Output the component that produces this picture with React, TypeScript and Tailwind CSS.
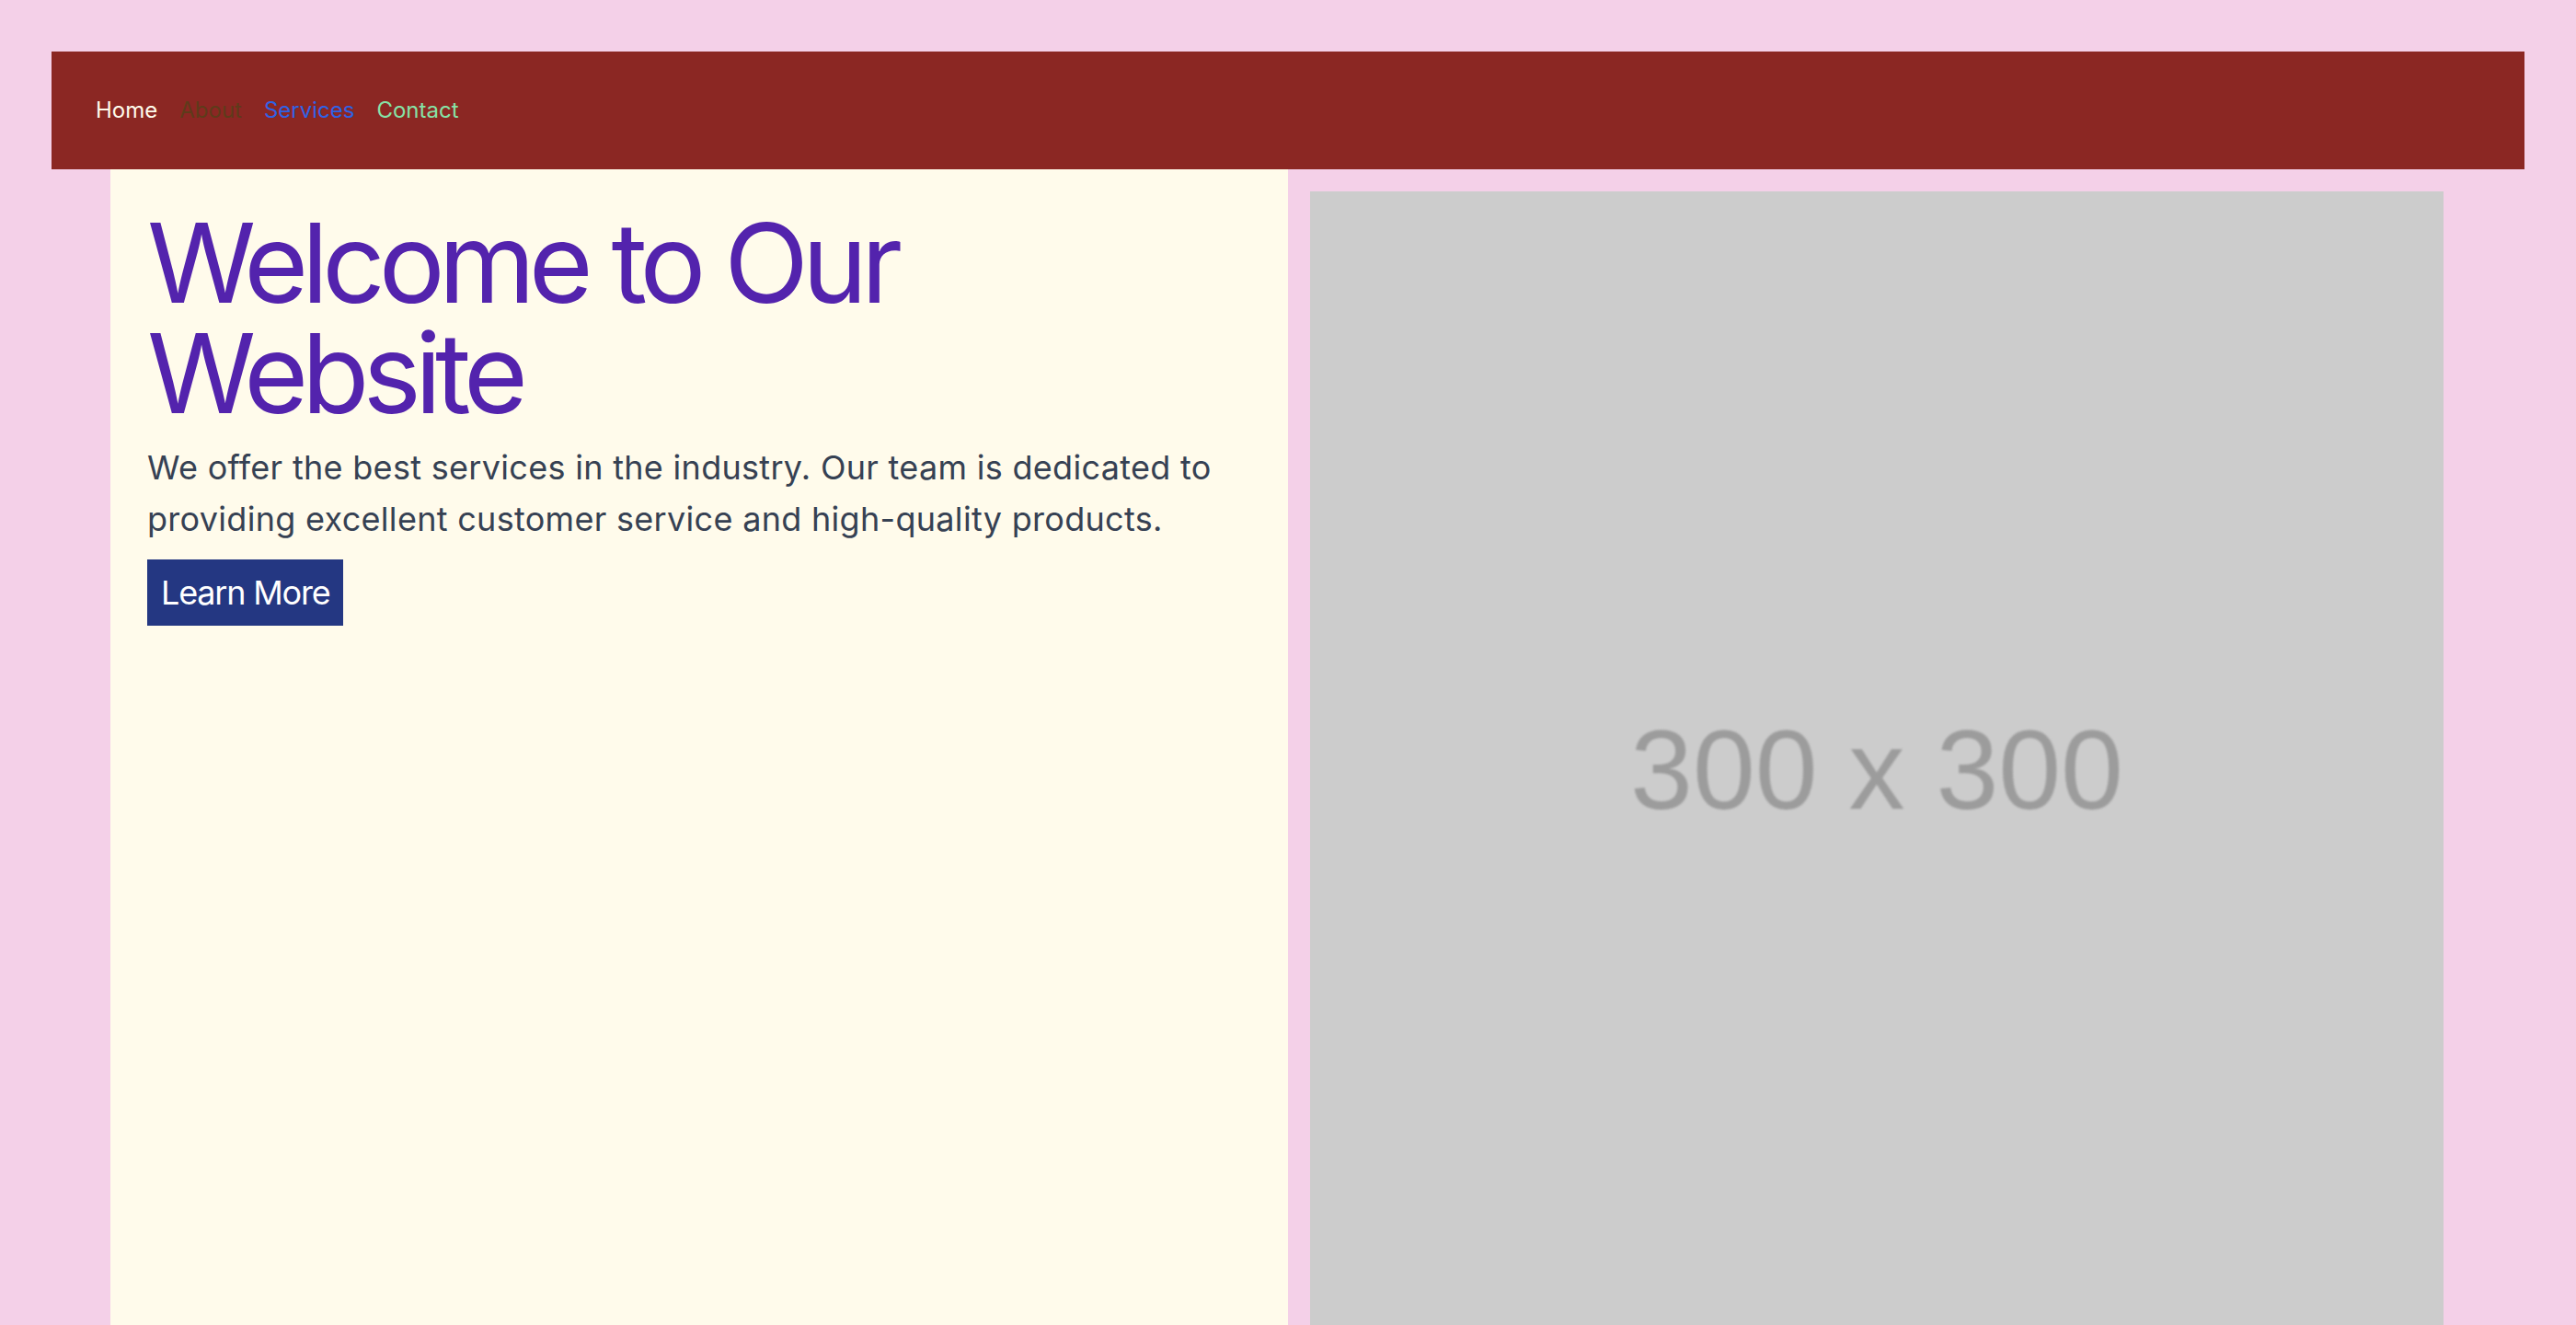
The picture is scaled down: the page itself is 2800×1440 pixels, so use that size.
export default function App() {
  return (
    <div className="min-h-screen bg-[#f4d0e8] pt-[56px] font-['Inter','Noto_Sans',sans-serif] overflow-hidden h-[1440px]">
      {/* NAV */}
      <nav className="mx-[56px] h-[128px] bg-[#8b2723] px-[48px] flex items-center gap-[24px] text-[24px] leading-[32px]">
        <a className="text-[#fffbeb]">Home</a>
        <a className="text-[#5e3b1a]">About</a>
        <a className="text-[#2f62e6]">Services</a>
        <a className="text-[#86e2a6]">Contact</a>
      </nav>

      {/* HERO */}
      <section className="max-w-[2560px] mx-auto grid grid-cols-2">
        <div className="bg-[#fffbeb] px-[40px] pt-[42px] pb-[40px]">
          <h1 className="text-[120px] leading-[120px] text-[#5323ad] tracking-[-7px]">
            Welcome to Our Website
          </h1>
          <p className="mt-[14px] text-[36px] leading-[56px] text-[#364153] tracking-[0.3px]">
            We offer the best services in the industry. Our team is dedicated to providing excellent customer service and high-quality products.
          </p>
          <button className="mt-[16px] bg-[#243782] text-white text-[36px] leading-[56px] px-[15px] py-[8px] tracking-[-1.2px]">
            Learn More
          </button>
        </div>

        <div className="p-[24px]">
          <div className="aspect-square bg-[#cccccc] flex items-center justify-center pt-[26px]">
            <span className="font-['Liberation_Sans',Arial,sans-serif] text-[122px] text-[#9c9c9c] blur-[1px]">
              300 x 300
            </span>
          </div>
        </div>
      </section>
    </div>
  );
}
